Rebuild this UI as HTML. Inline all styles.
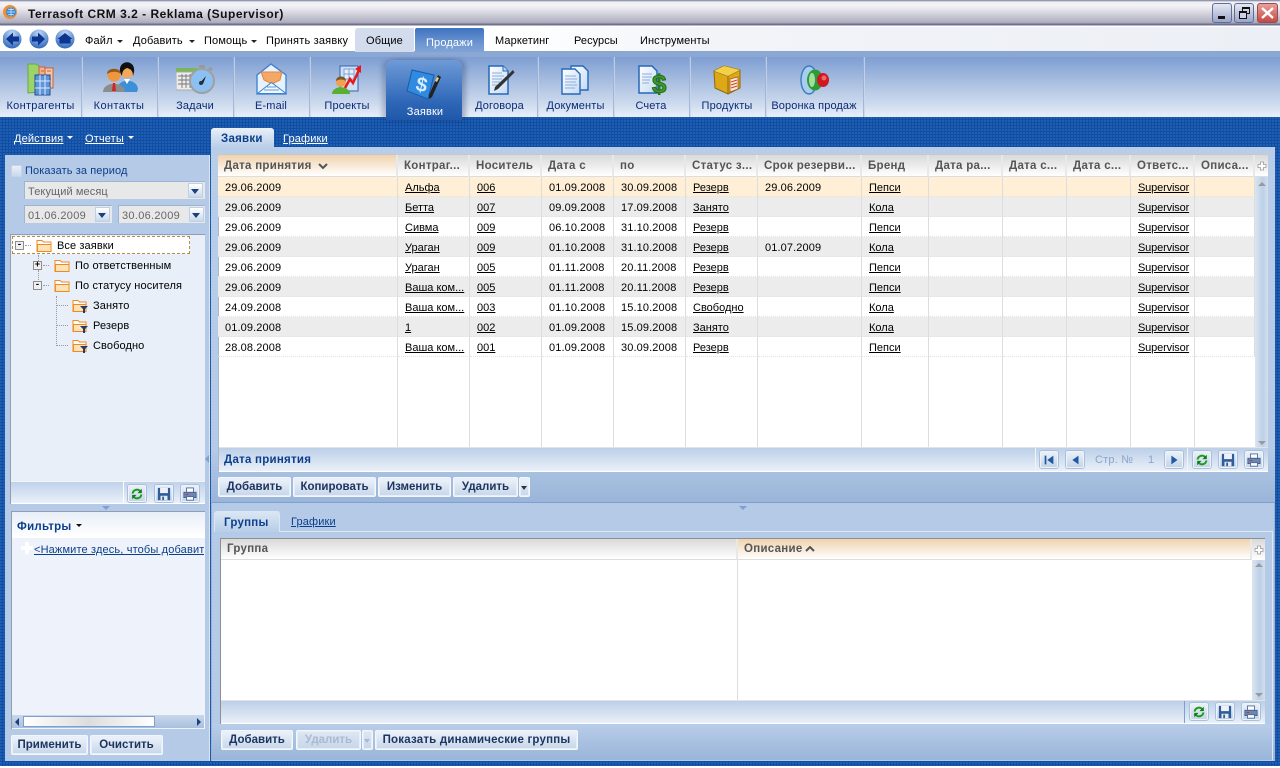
<!DOCTYPE html>
<html><head><meta charset="utf-8"><title>Terrasoft CRM</title>
<style>
*{box-sizing:border-box}
html,body{margin:0;padding:0}
body{width:1280px;height:768px;overflow:hidden;position:relative;background:#fff;font:11px "Liberation Sans",sans-serif;color:#000}
.a,.t{position:absolute;white-space:nowrap}
.t{line-height:14px;margin-top:1px}
.dots{background-color:#0f4ea3;background-image:radial-gradient(circle at 1px 1px,#2b68bd 0.7px,transparent 1px);background-size:3px 3px}
.bt{position:absolute;height:20px;border-radius:2px;background:linear-gradient(#eef3fa,#c6d6ea);box-shadow:inset 0 0 0 1px #e6eef8;font:bold 11.5px/19px "Liberation Sans",sans-serif;color:#1d3560;text-align:center;white-space:nowrap;border:1px solid #f3f7fc}
.bt.d{color:#a9b9d0;background:linear-gradient(#dfe8f4,#c6d6ea)}
.tri{position:absolute;width:0;height:0;border-left:4px solid transparent;border-right:4px solid transparent;border-top:4px solid #1d3f7e}
.tri.s{border-left-width:3px;border-right-width:3px;border-top-width:3px}
.sep{position:absolute;width:2px;top:57px;height:60px;background:linear-gradient(90deg,#7f9bc8,#e4ebf6);opacity:.8}
.lbl{position:absolute;top:99px;color:#0a2a78;text-align:center;line-height:14px;letter-spacing:.15px}
.ib{position:absolute;width:18px;height:17px;border:1px solid #eef3fa;border-radius:2px;background:linear-gradient(#eaf0f8,#c5d5ea);box-shadow:0 0 0 1px #a9c0dd}
.ib svg{position:absolute;left:1px;top:.5px;width:14px;height:14px}
table{border-collapse:separate;border-spacing:0;table-layout:fixed;position:absolute}
td{padding:2px 0 0 7px;height:20px;line-height:16px;border-right:1px solid #ddd;border-bottom:1px dotted #e3e3e3;overflow:hidden;white-space:nowrap;letter-spacing:.12px}
td u{text-decoration:underline;letter-spacing:0}
td u.l{letter-spacing:-.15px}
.h{position:absolute;top:155px;height:22px;font:bold 11.5px/21px "Liberation Sans",sans-serif;color:#555;padding:1px 0 0 6px;background:linear-gradient(#d9d9d9,#fff);border-right:2px solid #e8e8e8;border-bottom:1px solid #ddd;white-space:nowrap;overflow:hidden;letter-spacing:.28px}
.fold{position:absolute;width:16px;height:13px}
.dash{position:absolute;border-color:#999;border-style:dotted;border-width:0}
.pm{position:absolute;width:9px;height:9px;border:1px solid #8e8e8e;background:#f0f0f0;font:bold 9px/6px "Liberation Mono",monospace;text-align:center;color:#000}
.bd{font-weight:bold;color:#0b3f8c;font-size:11.5px;letter-spacing:.25px}
</style></head><body>
<svg width="0" height="0" style="position:absolute"><defs>
<symbol id="ref" viewBox="0 0 16 16"><path d="M3 7.500A5 5 0 0 1 11.500 4.500" fill="none" stroke="#1f9a1f" stroke-width="2.200"/><path d="M13 8.500A5 5 0 0 1 4.500 11.500" fill="none" stroke="#1f9a1f" stroke-width="2.200"/><path d="M13.500 2v5h-5zM2.500 14V9h5z" fill="#0d7d10"/></symbol>
<symbol id="sav" viewBox="0 0 16 16"><path d="M1 1h14v14H1z" fill="#2f5c9a"/><path d="M3.500 1h9v6h-9z" fill="#eef2f8"/><path d="M4 10h8v5H4z" fill="#e3e9f2"/><path d="M6 11h2v4H6z" fill="#2f5c9a"/></symbol>
<symbol id="prn" viewBox="0 0 16 16"><path d="M4 1h8v5H4z" fill="#fff" stroke="#48699b"/><path d="M1 6h14v6H1z" fill="#6c88b2" stroke="#40608f"/><path d="M3 8h3v1H3z" fill="#e02020"/><path d="M4 11h8v4H4z" fill="#fff" stroke="#48699b"/></symbol>
<symbol id="fo" viewBox="0 0 16 13"><path d="M1 3V1.500h5l1.500 1.500H15v9.500H1z" fill="#fff" stroke="#f08a20"/><path d="M1.500 5.500h13.500v7H1.500z" fill="#ffe3b8" stroke="#f08a20" stroke-width=".9"/></symbol>
<symbol id="ff" viewBox="0 0 16 14"><path d="M1 3V1.500h5l1.500 1.500H14v9.500H1z" fill="#fff" stroke="#f08a20"/><path d="M1.500 5.500H14v7H1.500z" fill="#ffe3b8" stroke="#f08a20" stroke-width=".9"/><path d="M8 7h8l-3 3v4h-2v-4z" fill="#1f3c6e"/></symbol>
<linearGradient id="doc" x1="0" y1="0" x2="1" y2="1"><stop offset="0" stop-color="#fff"/><stop offset="1" stop-color="#c4daf6"/></linearGradient>
</defs></svg>

<!-- Title bar -->
<div class="a" style="left:0;top:0;width:1280px;height:27px;background:linear-gradient(#777a9a 0,#eeeef4 2px,#f2f2f6 6px,#b5b4c4 21px,#a9a8ba 23px,#6e7090 24px,#6e7090 25px,#fff 26px)"></div>
<svg class="a" style="left:2px;top:4px" width="16" height="16" viewBox="0 0 16 16"><circle cx="8" cy="8" r="7" fill="#f09030"/><circle cx="9" cy="8" r="5" fill="#3b86cf"/><path d="M5 8h8M9 3v10M6 5c2 1 4 1 6 0M6 11c2-1 4-1 6 0" stroke="#d8ecff" stroke-width=".7" fill="none"/></svg>
<div class="t" style="left:28px;top:6px;font:bold 12px/14px 'Liberation Sans',sans-serif;letter-spacing:.5px;color:#111">Terrasoft CRM 3.2 - Reklama (Supervisor)</div>
<div class="a" style="left:1212px;top:3px;width:20px;height:20px;border-radius:3px;border:1px solid #5c6f99;background:linear-gradient(#e6e8f2,#9ba5c8)"><div class="a" style="left:5px;top:12px;width:7px;height:3px;background:#111"></div></div>
<div class="a" style="left:1234px;top:3px;width:20px;height:20px;border-radius:3px;border:1px solid #5c6f99;background:linear-gradient(#e6e8f2,#9ba5c8)"><div class="a" style="left:7px;top:3px;width:8px;height:7px;border:1px solid #111;border-top-width:2px"></div><div class="a" style="left:4px;top:7px;width:8px;height:8px;border:1px solid #111;border-top-width:2px;background:#ccd0e2"></div></div>
<div class="a" style="left:1257px;top:3px;width:21px;height:20px;border-radius:3px;border:1px solid #9a4a55;background:linear-gradient(#e8a098,#c64a44)"><svg class="a" style="left:3px;top:3px" width="13" height="12"><path d="M1 1l11 10M12 1L1 11" stroke="#fff" stroke-width="2.400"/></svg></div>

<!-- Menu bar -->
<div class="a" style="left:0;top:27px;width:1280px;height:25px;background:linear-gradient(90deg,#fff 0,#fff 40%,#f2f4f8 55%,#eceff5 100%);border-bottom:1px solid #8aa6cf"></div>
<svg class="a" style="left:3px;top:29px" width="80" height="20" viewBox="0 0 80 20">
<defs><radialGradient id="nb" cx=".5" cy=".2" r=".8"><stop offset="0" stop-color="#c0d8f4"/><stop offset="1" stop-color="#2f68bc"/></radialGradient></defs>
<circle cx="9" cy="10" r="9.500" fill="url(#nb)"/><path d="M16 7.500H10V3.500L3 10l7 6.500v-4h6z" fill="#0c3490"/>
<circle cx="36" cy="10" r="9.500" fill="url(#nb)"/><path d="M29 7.500h6V3.500l7 6.500-7 6.500v-4h-6z" fill="#0c3490"/>
<circle cx="62" cy="10" r="9.500" fill="url(#nb)"/><path d="M54.500 10l7.500-6 7.500 6h-2v4.500h-11V10z" fill="#0c3490"/></svg>
<div class="t" style="left:85px;top:33px;letter-spacing:.15px">Файл</div><div class="tri s" style="left:117px;top:40px;border-top-color:#222"></div>
<div class="t" style="left:133px;top:33px;letter-spacing:.15px">Добавить</div><div class="tri s" style="left:189px;top:40px;border-top-color:#222"></div>
<div class="t" style="left:204px;top:33px;letter-spacing:.15px">Помощь</div><div class="tri s" style="left:251px;top:40px;border-top-color:#222"></div>
<div class="t" style="left:266px;top:33px;letter-spacing:.2px">Принять заявку</div>
<div class="a" style="left:355px;top:28px;width:59px;height:24px;background:#d2dcec;border-radius:3px 0 0 0"></div>
<div class="t" style="left:366px;top:33px;letter-spacing:.15px">Общие</div>
<div class="a" style="left:415px;top:28px;width:69px;height:27px;background:linear-gradient(#3f72bf,#6f98d2 60%,#86a7d6);border-radius:2px 2px 0 0"></div>
<div class="t" style="left:426px;top:35px;color:#fff;letter-spacing:.15px">Продажи</div>
<div class="t" style="left:495px;top:33px;letter-spacing:.1px">Маркетинг</div>
<div class="t" style="left:574px;top:33px;letter-spacing:.05px">Ресурсы</div>
<div class="t" style="left:640px;top:33px;letter-spacing:.1px">Инструменты</div>

<!-- Toolbar -->
<div class="a" style="left:0;top:52px;width:1280px;height:65px;background:linear-gradient(#8aa6d4,#7f9fd3 6px,#a9bfe0 30px,#cad8ec 50px,#e6edf7 64px)"></div>
<div class="a" style="left:0;top:52px;width:1280px;height:5px;background:#8ba7d4"></div>
<div class="a dots" style="left:0;top:117px;width:1280px;height:651px"></div>
<div class="a" style="left:0;top:766px;width:1280px;height:2px;background:#fff"></div>

<div class="sep" style="left:81px"></div><div class="sep" style="left:157px"></div><div class="sep" style="left:233px"></div><div class="sep" style="left:309px"></div><div class="sep" style="left:537px"></div><div class="sep" style="left:613px"></div><div class="sep" style="left:689px"></div><div class="sep" style="left:765px"></div><div class="sep" style="left:863px"></div>

<div class="a" style="left:386px;top:60px;width:76px;height:60px;border-radius:7px 7px 0 0;background:linear-gradient(#6f9ad6,#4a7ec6 40%,#2f67b8 70%,#1f58aa);box-shadow:4px 0 5px rgba(30,50,100,.3),-4px 0 5px rgba(30,50,100,.25)"></div>

<!-- Toolbar icons -->
<svg class="a" style="left:27px;top:63px" width="27" height="33" viewBox="0 0 27 33"><path d="M1 1h8l3 2v26l-11 1z" fill="#9bd46a" stroke="#6aa840"/><path d="M12 4h6v24h-6z" fill="#f2b090" stroke="#c8603a"/><path d="M18 5h8v20h-8z" fill="#f6c8a8" stroke="#c8603a"/><path d="M20 8h4M20 12h4M20 16h4M14 8h3M14 12h3" stroke="#d06030"/><path d="M8 12h15v20H8z" fill="#5f95dc" stroke="#22508f"/><path d="M8 18h15M8 25h15M13 12v20M18 12v20" stroke="#dbe9fa" stroke-width="1"/></svg>
<svg class="a" style="left:102px;top:62px" width="36" height="32" viewBox="0 0 36 32"><circle cx="25" cy="9" r="7" fill="#f2a85a"/><path d="M18 10c-2-13 16-13 14 0l-1 4c0-6-3-7-6-8-2 1-5 2-5 8z" fill="#111"/><path d="M15 27c1-11 20-11 21 0l-1 3H16z" fill="#3d8fd8"/><path d="M22 17l3 5 3-5z" fill="#fff"/><circle cx="12" cy="13" r="6.500" fill="#f0963c"/><path d="M5 12c0-7 14-7 14 0-3-3-10-3-14 0z" fill="#8a5a20"/><path d="M1 30c0-11 22-11 22 0z" fill="#8c8c8c"/><path d="M11 21h2l1 8h-4z" fill="#d82020"/></svg>
<svg class="a" style="left:176px;top:64px" width="40" height="32" viewBox="0 0 40 32"><path d="M0 4h22v4H0z" fill="#78b858"/><path d="M0 8h26v18H0z" fill="#ececec" stroke="#aaa"/><path d="M2 12h16M2 16h16M2 20h16M6 10v14M10 10v14M14 10v14" stroke="#777" stroke-width=".9"/><circle cx="26" cy="17" r="12" fill="#8cc0f0" stroke="#a0a0a0" stroke-width="2"/><path d="M23 1h6v3h-6z" fill="#999"/><path d="M34 3l3 2-2 2-3-2z" fill="#999"/><path d="M24 19l6-7-3 8z" fill="#123"/><circle cx="25" cy="19" r="2" fill="#234"/></svg>
<svg class="a" style="left:256px;top:63px" width="31" height="32" viewBox="0 0 31 32"><path d="M1 12L15 1l15 11v19H1z" fill="#e8f2fe" stroke="#3a80d0" stroke-width="1.300"/><path d="M5 9h21l-2 8-8 4-8-4z" fill="#f4a868" stroke="#e08840"/><path d="M1.500 30.500l14-11 14.500 11z" fill="#f2f8ff" stroke="#3a80d0"/><path d="M8 27h15M11 24h9" stroke="#5a9ad8"/></svg>
<svg class="a" style="left:332px;top:63px" width="32" height="32" viewBox="0 0 32 32"><path d="M8 3h18v25H8z" fill="#cfe0f6" stroke="#2f64ae"/><path d="M12 6h10v10H12zM12 11h10M17 6v10" stroke="#7ba2d4" fill="#e6effa"/><path d="M13 25l5-9 3 4 6-13" fill="none" stroke="#e81818" stroke-width="2.500"/><path d="M23 6l6-4 0 8z" fill="#e81818"/><circle cx="9" cy="19" r="5" fill="#f0a050"/><path d="M4 18c0-6 10-6 10 0-3-2-7-2-10 0z" fill="#7a5820"/><path d="M0 31c0-9 18-9 18 0z" fill="#58b030"/></svg>
<svg class="a" style="left:406px;top:67px" width="36" height="34" viewBox="0 0 36 34"><path d="M6 3l22 5-6 24L1 24z" fill="#2f8ae0" stroke="#1a5aa8"/><text x="10" y="24" font-family="Liberation Sans,sans-serif" font-size="20" fill="#d8eeff" font-weight="bold" transform="rotate(12 14 18)">$</text><path d="M32 8l3 2-9 20-3 2 0-4z" fill="#222"/><path d="M31 10l2 1-2 4-2-1z" fill="#e8d080"/></svg>
<svg class="a" style="left:488px;top:65px" width="27" height="30" viewBox="0 0 27 30"><path d="M1 1h14l5 5v23H1z" fill="url(#doc)" stroke="#2468b8" stroke-width="1.500"/><path d="M15 1v5h5" fill="#bcd6f4" stroke="#2468b8"/><path d="M4 8h10M4 11h12M4 14h10M4 17h8M4 20h6" stroke="#8aaede"/><path d="M25 5l1.500 2.500L10 24l-4 2 1-4z" fill="#333"/></svg>
<svg class="a" style="left:561px;top:65px" width="28" height="30" viewBox="0 0 28 30"><path d="M10 1h12l5 5v19H10z" fill="url(#doc)" stroke="#2468b8" stroke-width="1.400"/><path d="M1 4h13l5 5v20H1z" fill="url(#doc)" stroke="#2468b8" stroke-width="1.400"/><path d="M4 11h11M4 14h12M4 17h11M4 20h12M4 23h10" stroke="#8aaede"/></svg>
<svg class="a" style="left:638px;top:65px" width="30" height="30" viewBox="0 0 30 30"><path d="M1 1h13l5 5v22H1z" fill="url(#doc)" stroke="#2468b8" stroke-width="1.500"/><path d="M4 9h10M4 12h10M4 15h8M4 18h7" stroke="#8aaede"/><text x="14" y="28" font-family="Liberation Sans,sans-serif" font-size="26" font-weight="bold" fill="#3f9a2a" stroke="#1f6f14" stroke-width="1">$</text></svg>
<svg class="a" style="left:713px;top:65px" width="28" height="30" viewBox="0 0 28 30"><path d="M1 6l10-5 16 4v18l-12 6-13-6z" fill="#dca818" stroke="#8a6a10"/><path d="M1 6l14 5 12-6M15 11v18" fill="none" stroke="#8a6a10"/><path d="M1 6l10-5 16 4-12 6z" fill="#f4d048"/><path d="M17 14l8-2v12l-8 3z" fill="#f8ecd8" stroke="#b05020" stroke-width=".8"/><path d="M18 17l6-2M18 20l6-2M18 23l6-2" stroke="#d04020"/></svg>
<svg class="a" style="left:800px;top:65px" width="30" height="30" viewBox="0 0 30 30"><ellipse cx="9" cy="15" rx="8" ry="14" fill="#a8cdee" stroke="#3a7cbc" stroke-width="1.400"/><ellipse cx="15" cy="15" rx="8" ry="10.500" fill="#2f9a38"/><ellipse cx="12" cy="15" rx="3" ry="7" fill="#9fe09f"/><ellipse cx="23" cy="15" rx="6" ry="7" fill="#d01820"/><ellipse cx="24" cy="13" rx="2.500" ry="2.500" fill="#f06a6a"/></svg>

<div class="lbl" style="left:0;width:81px;letter-spacing:.3px">Контрагенты</div>
<div class="lbl" style="left:81px;width:76px;letter-spacing:.4px">Контакты</div>
<div class="lbl" style="left:157px;width:76px">Задачи</div>
<div class="lbl" style="left:233px;width:76px">E-mail</div>
<div class="lbl" style="left:309px;width:76px">Проекты</div>
<div class="lbl" style="left:387px;width:76px;top:105px;color:#fff">Заявки</div>
<div class="lbl" style="left:462px;width:75px">Договора</div>
<div class="lbl" style="left:538px;width:75px">Документы</div>
<div class="lbl" style="left:613px;width:76px">Счета</div>
<div class="lbl" style="left:689px;width:76px">Продукты</div>
<div class="lbl" style="left:765px;width:98px;letter-spacing:.1px">Воронка продаж</div>

<!-- Left top links -->
<div class="t" style="left:14px;top:131px;color:#fff;text-decoration:underline;letter-spacing:.15px">Действия</div><div class="tri s" style="left:67px;top:136px;border-top-color:#fff"></div>
<div class="t" style="left:85px;top:131px;color:#fff;text-decoration:underline;letter-spacing:.15px">Отчеты</div><div class="tri s" style="left:128px;top:136px;border-top-color:#fff"></div>

<!-- Left panel -->
<div class="a" style="left:5px;top:155px;width:205px;height:606px;background:#b4cae6;border-right:1px solid #dbe6f4"></div>
<div class="a" style="left:11px;top:165px;width:11px;height:12px;background:linear-gradient(#eaf0f9,#cbd9ec);border:1px solid #c3d3e8"></div>
<div class="t" style="left:25px;top:163px;color:#0b3f8c;letter-spacing:.1px">Показать за период</div>
<div class="a" style="left:24px;top:181px;width:181px;height:18px;background:#e8e8e8;border:1px solid #9fb4d0;border-right:0;border-bottom:0"></div>
<div class="t" style="left:28px;top:184px;color:#666;letter-spacing:.1px">Текущий месяц</div>
<div class="a" style="left:188px;top:183px;width:15px;height:15px;background:linear-gradient(#fff,#c8d8ec);border:1px solid #bed0e8"></div><div class="tri" style="left:191px;top:189px;border-left-width:4.500px;border-right-width:4.500px;border-top-width:5px"></div>
<div class="a" style="left:24px;top:205px;width:88px;height:18px;background:#e8e8e8;border:1px solid #9fb4d0;border-right:0;border-bottom:0"></div>
<div class="t" style="left:28px;top:208px;color:#666;letter-spacing:.3px">01.06.2009</div>
<div class="a" style="left:95px;top:207px;width:15px;height:15px;background:linear-gradient(#fff,#c8d8ec);border:1px solid #bed0e8"></div><div class="tri" style="left:98px;top:213px;border-left-width:4.500px;border-right-width:4.500px;border-top-width:5px"></div>
<div class="a" style="left:118px;top:205px;width:87px;height:18px;background:#e8e8e8;border:1px solid #9fb4d0;border-right:0;border-bottom:0"></div>
<div class="t" style="left:122px;top:208px;color:#666;letter-spacing:.3px">30.06.2009</div>
<div class="a" style="left:189px;top:207px;width:15px;height:15px;background:linear-gradient(#fff,#c8d8ec);border:1px solid #bed0e8"></div><div class="tri" style="left:192px;top:213px;border-left-width:4.500px;border-right-width:4.500px;border-top-width:5px"></div>

<!-- Tree -->
<div class="a" style="left:10px;top:234px;width:195px;height:270px;background:#e8eff8;border:1px solid #8f9eb0;border-width:1px 0 0 1px"></div>
<div class="a" style="left:12px;top:236px;width:178px;height:18px;background:#fff;border:1px dashed #b48d4e"></div>
<div class="pm" style="left:15px;top:241px">-</div><div class="dash" style="left:25px;top:245px;width:6px;border-top-width:1px"></div>
<svg class="fold" style="left:36px;top:239px"><use href="#fo"/></svg><div class="t" style="left:57px;top:238px;letter-spacing:.1px">Все заявки</div>
<div class="dash" style="left:38px;top:255px;height:12px;border-left-width:1px"></div>
<div class="pm" style="left:33px;top:261px">+</div><div class="dash" style="left:43px;top:265px;width:6px;border-top-width:1px"></div>
<svg class="fold" style="left:54px;top:259px"><use href="#fo"/></svg><div class="t" style="left:75px;top:258px;letter-spacing:.12px">По ответственным</div>
<div class="dash" style="left:38px;top:270px;height:12px;border-left-width:1px"></div>
<div class="pm" style="left:33px;top:281px">-</div><div class="dash" style="left:43px;top:285px;width:6px;border-top-width:1px"></div>
<svg class="fold" style="left:54px;top:279px"><use href="#fo"/></svg><div class="t" style="left:75px;top:278px;letter-spacing:.12px">По статусу носителя</div>
<div class="dash" style="left:56px;top:296px;height:50px;border-left-width:1px"></div>
<div class="dash" style="left:57px;top:305px;width:11px;border-top-width:1px"></div><div class="dash" style="left:57px;top:325px;width:11px;border-top-width:1px"></div><div class="dash" style="left:57px;top:345px;width:11px;border-top-width:1px"></div>
<svg class="fold" style="left:72px;top:299px;height:14px"><use href="#ff"/></svg><div class="t" style="left:93px;top:298px;letter-spacing:.1px">Занято</div>
<svg class="fold" style="left:72px;top:319px;height:14px"><use href="#ff"/></svg><div class="t" style="left:93px;top:318px;letter-spacing:.1px">Резерв</div>
<svg class="fold" style="left:72px;top:339px;height:14px"><use href="#ff"/></svg><div class="t" style="left:93px;top:338px;letter-spacing:.1px">Свободно</div>
<div class="a" style="left:11px;top:481px;width:194px;height:23px;background:linear-gradient(#c0d2ea,#eaf0f9);border-top:1px solid #f0f4fa;border-bottom:1px solid #fff"></div>
<div class="a" style="left:123px;top:481px;width:1px;height:22px;background:#fff"></div>
<div class="ib" style="left:128px;top:485px"><svg><use href="#ref"/></svg></div>
<div class="ib" style="left:155px;top:485px"><svg><use href="#sav"/></svg></div>
<div class="ib" style="left:181px;top:485px"><svg><use href="#prn"/></svg></div>
<div class="tri" style="left:102px;top:506px;border-top-color:#7f9fd3"></div>

<!-- Filters -->
<div class="a" style="left:11px;top:511px;width:194px;height:218px;background:#eef2fa;border-top:1px solid #8f9eb0;border-left:1px solid #8f9eb0"></div>
<div class="a" style="left:12px;top:512px;width:193px;height:26px;background:linear-gradient(#e8eff8,#fff)"></div>
<div class="t bd" style="left:17px;top:519px">Фильтры</div><div class="tri s" style="left:76px;top:524px;border-top-color:#111"></div>
<svg class="a" style="left:21px;top:542px" width="12" height="12"><path d="M4 0h4v4h4v4H8v4H4V8H0V4h4z" fill="#fff"/></svg>
<div class="a" style="left:34px;top:543px;width:170px;overflow:hidden;color:#0b3f8c;text-decoration:underline;line-height:14px;white-space:nowrap;letter-spacing:.15px">&lt;Нажмите здесь, чтобы добавить условие&gt;</div>
<div class="a" style="left:12px;top:715px;width:192px;height:13px;background:linear-gradient(#c8d8ec,#a9c0de)"></div>
<div class="a" style="left:23px;top:716px;width:132px;height:11px;background:linear-gradient(90deg,#fff,#ddd 50%,#fff);border:1px solid #7f9fd3"></div>
<div class="a" style="left:15px;top:718px;border-top:4px solid transparent;border-bottom:4px solid transparent;border-right:4px solid #1d3f7e"></div>
<div class="a" style="left:197px;top:718px;border-top:4px solid transparent;border-bottom:4px solid transparent;border-left:4px solid #1d3f7e"></div>
<div class="bt" style="left:11px;top:735px;width:77px">Применить</div>
<div class="bt" style="left:90px;top:735px;width:73px">Очистить</div>

<!-- Right panel -->
<div class="a" style="left:211px;top:147px;width:1064px;height:614px;background:#b4cae6;border:1px solid #9ab3d6;border-bottom:0;border-top:0"></div>
<div class="a" style="left:211px;top:147px;width:1064px;height:356px;background:linear-gradient(#b8cde8,#b4cae6 85%,#9ab5d9);border-bottom:1px solid #7f9fd3"></div>
<div class="a" style="left:211px;top:128px;width:63px;height:20px;background:linear-gradient(#e9f0f9,#b8cde8);border-radius:3px 3px 0 0"></div>
<div class="t bd" style="left:221px;top:131px">Заявки</div>
<div class="t" style="left:283px;top:131px;color:#fff;text-decoration:underline;letter-spacing:.15px">Графики</div>

<!-- Grid top -->
<div class="a" style="left:218px;top:154px;width:1050px;height:317px;background:#fff;border-top:1px solid #c8c8c8;border-left:1px solid #a9b8cc"></div>
<div class="h" style="left:218px;width:180px;background:linear-gradient(#f0d3ae,#fff)">Дата принятия<svg style="position:absolute;left:100px;top:8px" width="10" height="7"><path d="M1 1l4 4 4-4" fill="none" stroke="#555" stroke-width="2"/></svg></div>
<div class="h" style="left:398px;width:72px">Контраг...</div>
<div class="h" style="left:470px;width:72px">Носитель</div>
<div class="h" style="left:542px;width:72px">Дата с</div>
<div class="h" style="left:614px;width:72px">по</div>
<div class="h" style="left:686px;width:72px">Статус з...</div>
<div class="h" style="left:758px;width:104px">Срок резерви...</div>
<div class="h" style="left:862px;width:67px">Бренд</div>
<div class="h" style="left:929px;width:74px">Дата ра...</div>
<div class="h" style="left:1003px;width:64px">Дата с...</div>
<div class="h" style="left:1067px;width:64px">Дата с...</div>
<div class="h" style="left:1131px;width:64px">Ответс...</div>
<div class="h" style="left:1195px;width:60px">Описа...</div>
<div class="h" style="left:1255px;width:13px;padding:0;border-right:0"></div>
<svg class="a" style="left:1257px;top:161px" width="10" height="10"><path d="M3.500 1h3v2.500H9v3H6.500V9h-3V6.500H1v-3h2.500z" fill="#fff" stroke="#999" stroke-width=".8"/></svg>

<table style="left:218px;top:177px;width:1037px">
<colgroup><col style="width:180px"><col style="width:72px"><col style="width:72px"><col style="width:72px"><col style="width:72px"><col style="width:72px"><col style="width:104px"><col style="width:67px"><col style="width:74px"><col style="width:64px"><col style="width:64px"><col style="width:64px"><col style="width:60px"></colgroup>
<tr style="background:#feefd6"><td>29.06.2009</td><td><u>Альфа</u></td><td><u>006</u></td><td>01.09.2008</td><td>30.09.2008</td><td><u>Резерв</u></td><td>29.06.2009</td><td><u>Пепси</u></td><td></td><td></td><td></td><td><u class="l">Supervisor</u></td><td></td></tr>
<tr style="background:#ececec"><td>29.06.2009</td><td><u>Бетта</u></td><td><u>007</u></td><td>09.09.2008</td><td>17.09.2008</td><td><u>Занято</u></td><td></td><td><u>Кола</u></td><td></td><td></td><td></td><td><u class="l">Supervisor</u></td><td></td></tr>
<tr><td>29.06.2009</td><td><u>Сивма</u></td><td><u>009</u></td><td>06.10.2008</td><td>31.10.2008</td><td><u>Резерв</u></td><td></td><td><u>Пепси</u></td><td></td><td></td><td></td><td><u class="l">Supervisor</u></td><td></td></tr>
<tr style="background:#ececec"><td>29.06.2009</td><td><u>Ураган</u></td><td><u>009</u></td><td>01.10.2008</td><td>31.10.2008</td><td><u>Резерв</u></td><td>01.07.2009</td><td><u>Кола</u></td><td></td><td></td><td></td><td><u class="l">Supervisor</u></td><td></td></tr>
<tr><td>29.06.2009</td><td><u>Ураган</u></td><td><u>005</u></td><td>01.11.2008</td><td>20.11.2008</td><td><u>Резерв</u></td><td></td><td><u>Пепси</u></td><td></td><td></td><td></td><td><u class="l">Supervisor</u></td><td></td></tr>
<tr style="background:#ececec"><td>29.06.2009</td><td><u>Ваша ком...</u></td><td><u>005</u></td><td>01.11.2008</td><td>20.11.2008</td><td><u>Резерв</u></td><td></td><td><u>Пепси</u></td><td></td><td></td><td></td><td><u class="l">Supervisor</u></td><td></td></tr>
<tr><td>24.09.2008</td><td><u>Ваша ком...</u></td><td><u>003</u></td><td>01.10.2008</td><td>15.10.2008</td><td><u>Свободно</u></td><td></td><td><u>Кола</u></td><td></td><td></td><td></td><td><u class="l">Supervisor</u></td><td></td></tr>
<tr style="background:#ececec"><td>01.09.2008</td><td><u>1</u></td><td><u>002</u></td><td>01.09.2008</td><td>15.09.2008</td><td><u>Занято</u></td><td></td><td><u>Кола</u></td><td></td><td></td><td></td><td><u class="l">Supervisor</u></td><td></td></tr>
<tr><td>28.08.2008</td><td><u>Ваша ком...</u></td><td><u>001</u></td><td>01.09.2008</td><td>30.09.2008</td><td><u>Резерв</u></td><td></td><td><u>Пепси</u></td><td></td><td></td><td></td><td><u class="l">Supervisor</u></td><td></td></tr>
</table>
<div class="a" style="left:397px;top:357px;width:1px;height:90px;background:#ddd"></div><div class="a" style="left:469px;top:357px;width:1px;height:90px;background:#ddd"></div><div class="a" style="left:541px;top:357px;width:1px;height:90px;background:#ddd"></div><div class="a" style="left:613px;top:357px;width:1px;height:90px;background:#ddd"></div><div class="a" style="left:685px;top:357px;width:1px;height:90px;background:#ddd"></div><div class="a" style="left:757px;top:357px;width:1px;height:90px;background:#ddd"></div><div class="a" style="left:861px;top:357px;width:1px;height:90px;background:#ddd"></div><div class="a" style="left:928px;top:357px;width:1px;height:90px;background:#ddd"></div><div class="a" style="left:1002px;top:357px;width:1px;height:90px;background:#ddd"></div><div class="a" style="left:1066px;top:357px;width:1px;height:90px;background:#ddd"></div><div class="a" style="left:1130px;top:357px;width:1px;height:90px;background:#ddd"></div><div class="a" style="left:1194px;top:357px;width:1px;height:90px;background:#ddd"></div>
<div class="a" style="left:1255px;top:177px;width:13px;height:271px;background:linear-gradient(90deg,#dbe5f2,#bcd0e8 60%,#d3dfef)"></div>
<div class="tri" style="left:1258px;top:182px;border-top:0;border-bottom:4px solid #9a9a9a"></div>
<div class="tri" style="left:1258px;top:441px;border-top-color:#9a9a9a"></div>

<div class="a" style="left:219px;top:447px;width:1049px;height:25px;background:linear-gradient(#bccfe8,#eaf0f9);border-top:1px solid #e3e3e3;border-bottom:1px solid #fff"></div>
<div class="t bd" style="left:224px;top:452px">Дата принятия</div>
<div class="a" style="left:1035px;top:448px;width:1px;height:23px;background:#f0f4fa"></div><div class="a" style="left:1187px;top:448px;width:1px;height:23px;background:#f0f4fa"></div>
<div class="ib" style="left:1040px;top:451px"><svg viewBox="0 0 16 16"><path d="M3 3h2v10H3zM13 3v10L6 8z" fill="#1f5aa4"/></svg></div>
<div class="ib" style="left:1066px;top:451px"><svg viewBox="0 0 16 16"><path d="M12 3v10L5 8z" fill="#1f5aa4"/></svg></div>
<div class="t" style="left:1095px;top:452px;color:#8ba5c8;letter-spacing:.2px">Стр. №</div>
<div class="t" style="left:1148px;top:452px;color:#8ba5c8">1</div>
<div class="ib" style="left:1165px;top:451px"><svg viewBox="0 0 16 16"><path d="M5 3v10l7-5z" fill="#1f5aa4"/></svg></div>
<div class="ib" style="left:1193px;top:451px"><svg><use href="#ref"/></svg></div>
<div class="ib" style="left:1219px;top:451px"><svg><use href="#sav"/></svg></div>
<div class="ib" style="left:1245px;top:451px"><svg><use href="#prn"/></svg></div>

<div class="bt" style="left:218px;top:477px;width:73px">Добавить</div>
<div class="bt" style="left:293px;top:477px;width:83px">Копировать</div>
<div class="bt" style="left:378px;top:477px;width:73px">Изменить</div>
<div class="bt" style="left:453px;top:477px;width:65px">Удалить</div>
<div class="bt" style="left:519px;top:477px;width:11px"></div><div class="tri" style="left:521px;top:486px;border-top-color:#333;border-left-width:3.500px;border-right-width:3.500px"></div>
<div class="tri" style="left:739px;top:506px;border-top-color:#7f9fd3"></div>

<!-- Bottom section -->
<div class="a" style="left:214px;top:511px;width:66px;height:21px;background:linear-gradient(#dbe6f4,#b8cde8);border:1px solid #dbe6f4;border-bottom:0;border-radius:3px 3px 0 0"></div>
<div class="t bd" style="left:224px;top:515px">Группы</div>
<div class="t" style="left:291px;top:514px;color:#0b3f8c;text-decoration:underline;letter-spacing:.15px">Графики</div>
<div class="a" style="left:280px;top:531px;width:992px;height:1px;background:#dbe6f4"></div>
<div class="a" style="left:220px;top:538px;width:1045px;height:186px;background:#fff;border-top:1px solid #8f8f8f;border-left:1px solid #8f8f8f"></div>
<div class="h" style="left:221px;top:539px;width:517px;height:21px;padding-top:0">Группа</div>
<div class="h" style="left:738px;top:539px;width:514px;height:21px;padding-top:0;background:linear-gradient(#f0d3ae,#fff)">Описание<svg style="position:absolute;left:67px;top:7px" width="10" height="7"><path d="M1 5l4-4 4 4" fill="none" stroke="#555" stroke-width="2"/></svg></div>
<div class="h" style="left:1252px;top:539px;width:13px;height:21px;padding:0;border:0"></div>
<svg class="a" style="left:1254px;top:545px" width="10" height="10"><path d="M3.500 1h3v2.500H9v3H6.500V9h-3V6.500H1v-3h2.500z" fill="#fff" stroke="#999" stroke-width=".8"/></svg>
<div class="a" style="left:737px;top:560px;width:1px;height:140px;background:#ddd"></div>
<div class="a" style="left:1252px;top:560px;width:13px;height:141px;background:linear-gradient(90deg,#dbe5f2,#bcd0e8 60%,#d3dfef)"></div>
<div class="tri" style="left:1255px;top:563px;border-top:0;border-bottom:4px solid #9a9a9a"></div>
<div class="tri" style="left:1255px;top:693px;border-top-color:#9a9a9a"></div>
<div class="a" style="left:221px;top:700px;width:1044px;height:24px;background:linear-gradient(#bccfe8,#eaf0f9);border-bottom:1px solid #fff;border-top:1px solid #e3e3e3"></div>
<div class="a" style="left:1184px;top:701px;width:1px;height:22px;background:#7f9fd3"></div>
<div class="ib" style="left:1190px;top:703px"><svg><use href="#ref"/></svg></div>
<div class="ib" style="left:1216px;top:703px"><svg><use href="#sav"/></svg></div>
<div class="ib" style="left:1242px;top:703px"><svg><use href="#prn"/></svg></div>
<div class="a" style="left:212px;top:724px;width:1062px;height:36px;background:linear-gradient(#b8cde8,#9ab5d9)"></div>
<div class="a" style="left:1272px;top:531px;width:1px;height:229px;background:#dbe6f4"></div>
<div class="bt" style="left:221px;top:730px;width:72px">Добавить</div>
<div class="bt d" style="left:296px;top:730px;width:65px">Удалить</div>
<div class="bt d" style="left:362px;top:730px;width:11px"></div><div class="tri" style="left:364px;top:739px;border-top-color:#a9b9d0;border-left-width:3.500px;border-right-width:3.500px"></div>
<div class="bt" style="left:375px;top:730px;width:203px;letter-spacing:.2px">Показать динамические группы</div>
<div class="tri" style="left:205px;top:455px;border-top:4px solid transparent;border-bottom:4px solid transparent;border-right:4px solid #7f9fd3;border-left:0"></div>
</body></html>
